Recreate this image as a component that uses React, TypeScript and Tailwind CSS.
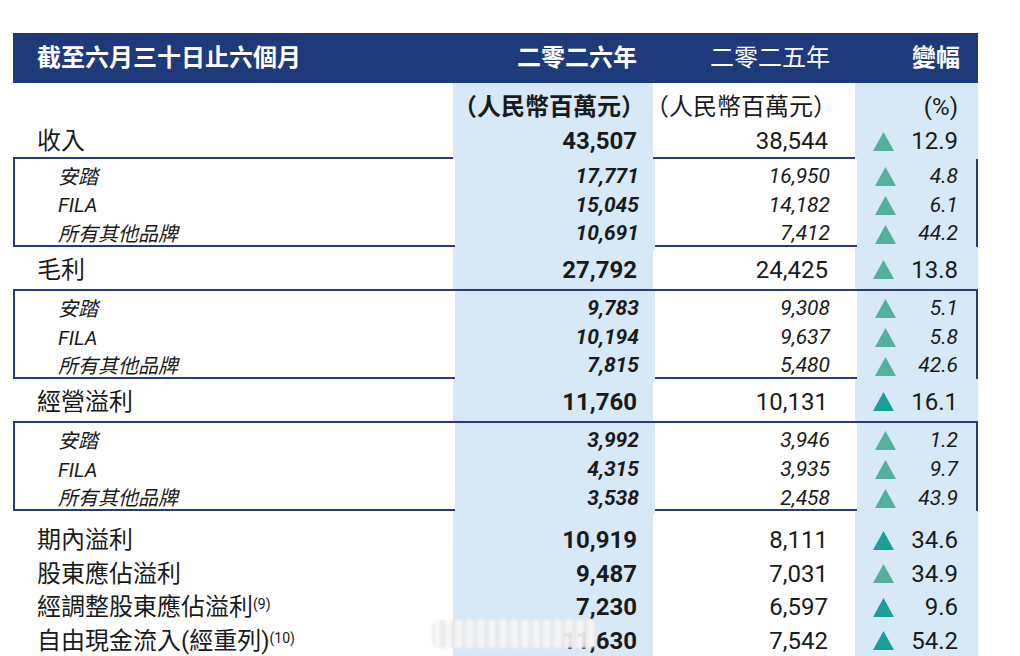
import React from "react";

type Row = {
  label: string;
  sup?: string;
  cur: string;
  prev: string;
  pct: string;
  dark?: boolean;
};

const NUM = "font-['Roboto','Noto_Sans_CJK_TC',sans-serif]";
const CJK = "font-['Roboto','Noto_Sans_CJK_TC',sans-serif]";

const Triangle = ({ dark }: { dark?: boolean }) => (
  <svg width="21" height="19" viewBox="0 0 21 19" className="shrink-0">
    <polygon points="10.5,0 21,19 0,19" fill={dark ? "#1a9e98" : "#52b09c"} />
  </svg>
);

const MainRow = ({ row, h }: { row: Row; h: string }) => (
  <div className={`grid grid-cols-[1fr_200px_202px_123px] ${h} text-[#1a1a1a]`}>
    <div className={`flex items-center pl-[24px] pt-[3px] text-[24px] ${CJK}`}>
      {row.label}
      {row.sup && (
        <span className={`text-[14px] self-start mt-[5px] ${NUM}`}>{row.sup}</span>
      )}
    </div>
    <div className={`flex items-center justify-end bg-[#d7e9f7] pr-[16px] pt-[3px] text-[24px] font-bold ${NUM}`}>
      {row.cur}
    </div>
    <div className={`flex items-center justify-end pr-[27px] pt-[3px] text-[24px] ${NUM}`}>
      {row.prev}
    </div>
    <div className={`flex items-center justify-between bg-[#d7e9f7] pl-[18px] pr-[20px] pt-[3px] text-[24px] ${NUM}`}>
      <Triangle dark={row.dark} />
      <span>{row.pct}</span>
    </div>
  </div>
);

const SubBox = ({ rows }: { rows: Row[] }) => (
  <div className="border-2 border-[#2b3a7c]">
    {rows.map((r) => (
      <div key={r.label} className="grid grid-cols-[1fr_200px_202px_119px] h-[28.7px] text-[#1a1a1a] italic">
        <div className={`flex items-center pl-[43px] pt-[2px] text-[20px] ${CJK}`}>{r.label}</div>
        <div className={`flex items-center justify-end bg-[#d7e9f7] pr-[16px] pt-[2px] text-[21px] font-bold ${NUM}`}>
          {r.cur}
        </div>
        <div className={`flex items-center justify-end pr-[27px] pt-[2px] text-[21px] ${NUM}`}>{r.prev}</div>
        <div className={`flex items-center justify-between bg-[#d7e9f7] pl-[18px] pr-[18px] pt-[2px] text-[21px] ${NUM}`}>
          <Triangle />
          <span>{r.pct}</span>
        </div>
      </div>
    ))}
  </div>
);

const brands = (a: string[], b: string[], c: string[]): Row[] => [
  { label: "安踏", cur: a[0], prev: a[1], pct: a[2] },
  { label: "FILA", cur: b[0], prev: b[1], pct: b[2] },
  { label: "所有其他品牌", cur: c[0], prev: c[1], pct: c[2] },
];

const bottom: Row[] = [
  { label: "期內溢利", cur: "10,919", prev: "8,111", pct: "34.6", dark: true },
  { label: "股東應佔溢利", cur: "9,487", prev: "7,031", pct: "34.9" },
  { label: "經調整股東應佔溢利", sup: "(9)", cur: "7,230", prev: "6,597", pct: "9.6", dark: true },
  { label: "自由現金流入(經重列)", sup: "(10)", cur: "11,630", prev: "7,542", pct: "54.2", dark: true },
];

export default function App() {
  return (
    <div className="relative w-[1020px] h-[656px] overflow-hidden bg-white pt-[33px] pl-[13px]">
      <div className="w-[965px]">
        <div className={`grid grid-cols-[1fr_200px_202px_123px] h-[50px] bg-[#1e3a7b] text-white text-[24px] font-bold ${CJK}`}>
          <div className="flex items-center pl-[24px]">截至六月三十日止六個月</div>
          <div className="flex items-center justify-end pr-[16px]">二零二六年</div>
          <div className="flex items-center justify-end pr-[25px] font-normal">二零二五年</div>
          <div className="flex items-center justify-end pr-[18px]">變幅</div>
        </div>

        <div className={`grid grid-cols-[1fr_200px_202px_123px] h-[37px] text-[#1a1a1a] ${CJK}`}>
          <div />
          <div className="flex items-center justify-end bg-[#d7e9f7] pr-[8px] pt-[6px] text-[24px] font-bold whitespace-nowrap">
            （人民幣百萬元）
          </div>
          <div className="flex items-center justify-end pr-[18px] pt-[6px] text-[24px] whitespace-nowrap">
            （人民幣百萬元）
          </div>
          <div className={`flex items-center justify-end bg-[#d7e9f7] pr-[20px] pt-[6px] text-[24px] ${NUM}`}>(%)</div>
        </div>

        <MainRow h="h-[37px]" row={{ label: "收入", cur: "43,507", prev: "38,544", pct: "12.9" }} />
        <SubBox rows={brands(["17,771", "16,950", "4.8"], ["15,045", "14,182", "6.1"], ["10,691", "7,412", "44.2"])} />
        <MainRow h="h-[42px]" row={{ label: "毛利", cur: "27,792", prev: "24,425", pct: "13.8" }} />
        <SubBox rows={brands(["9,783", "9,308", "5.1"], ["10,194", "9,637", "5.8"], ["7,815", "5,480", "42.6"])} />
        <MainRow h="h-[42px]" row={{ label: "經營溢利", cur: "11,760", prev: "10,131", pct: "16.1", dark: true }} />
        <SubBox rows={brands(["3,992", "3,946", "1.2"], ["4,315", "3,935", "9.7"], ["3,538", "2,458", "43.9"])} />

        <div className="grid grid-cols-[1fr_200px_202px_123px] h-[8px]">
          <div />
          <div className="bg-[#d7e9f7]" />
          <div />
          <div className="bg-[#d7e9f7]" />
        </div>
        {bottom.map((r) => (
          <MainRow key={r.label} h="h-[33.5px]" row={r} />
        ))}
      </div>

      <div className="absolute left-[432px] top-[620px] w-[165px] h-[28px] rounded-[6px] bg-[repeating-linear-gradient(90deg,rgba(235,235,235,0.95)_0px,rgba(250,250,250,0.9)_6px,rgba(225,225,225,0.95)_11px)] blur-[1px]" />
    </div>
  );
}
